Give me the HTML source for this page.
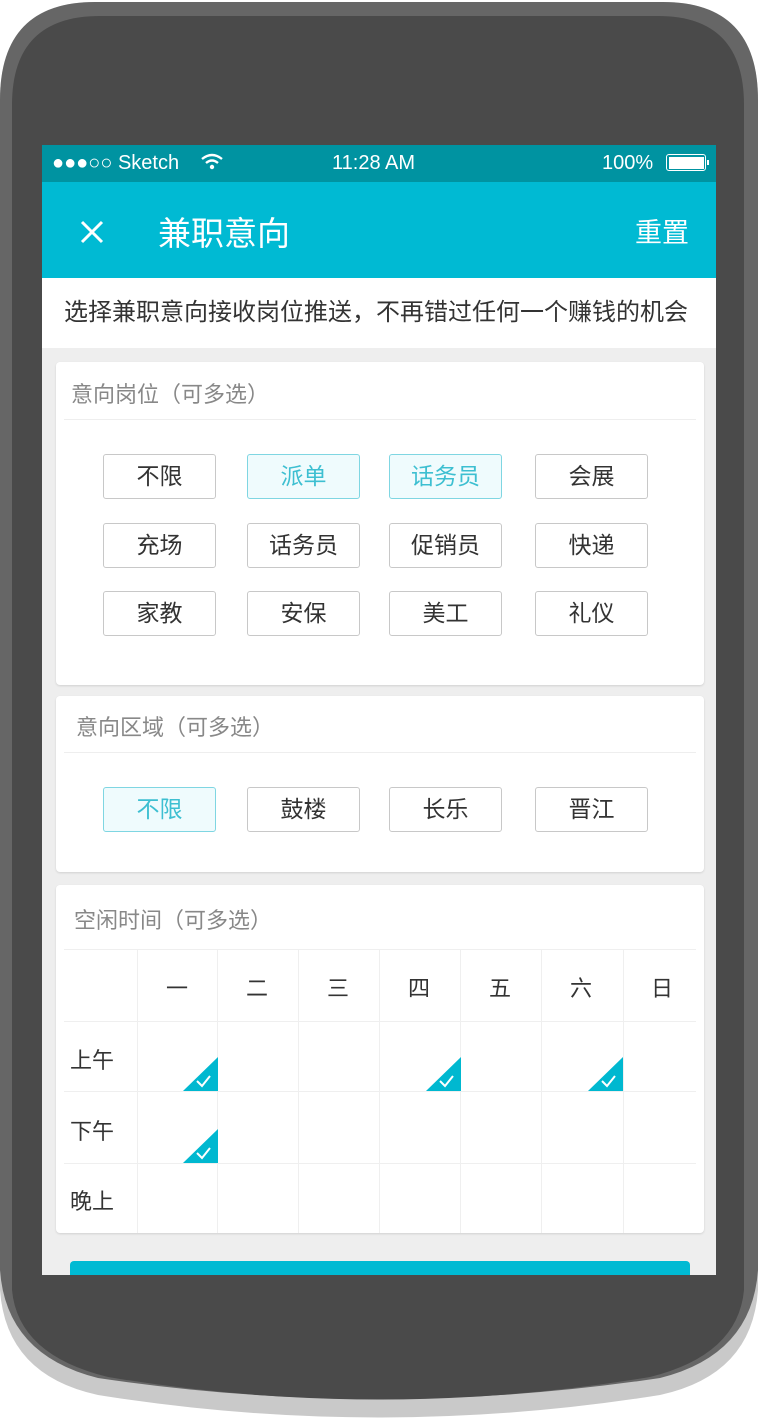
<!DOCTYPE html>
<html><head><meta charset="utf-8"><style>
*{margin:0;padding:0;box-sizing:border-box}
body{width:758px;height:1418px;background:#fff;position:relative;overflow:hidden;font-family:"Liberation Sans","Noto Sans CJK SC",sans-serif}
.abs{position:absolute}
.screen{left:42px;top:145px;width:674px;height:1130px;background:#eeeeee;overflow:hidden}
.status{left:0;top:0;width:674px;height:37px;background:#0093a1;color:#fff;font-size:20px}
.nav{left:0;top:37px;width:674px;height:96px;background:#00bad3;color:#fff}
.sub{left:0;top:133px;width:674px;height:70px;background:#fff;color:#333;font-size:24px;line-height:70px;padding-left:22px;white-space:nowrap;overflow:hidden}
.card{background:#fff;border-radius:4px;box-shadow:0 1px 2px rgba(0,0,0,.12)}
.ttl{color:#888;font-size:22px;position:absolute}
.hr{position:absolute;height:1px;background:#eee}
.btn{position:absolute;width:113px;height:45px;border:1px solid #c8c8c8;border-radius:3px;font-size:23px;color:#333;text-align:center;line-height:43px;background:#fff}
.btn.on{border-color:#7fd6e2;background:#effbfd;color:#3dbfd1}
.gl{position:absolute;background:#efefef}
.wd{position:absolute;font-size:22px;color:#333;text-align:center;width:80px}
.rl{position:absolute;font-size:22px;color:#333}
</style></head><body>
<svg class="abs" style="left:0;top:0" width="758" height="1418">
<path d="M0,100 Q0,2 95,2 L663,2 Q758,2 758,100 L758,1290 Q752,1375 660,1395 Q379,1440 98,1395 Q6,1375 0,1290 Z" fill="#c9c9c9"/>
<path d="M0,100 Q0,2 95,2 L663,2 Q758,2 758,100 L758,1270 Q752,1355 660,1378 Q379,1420 98,1378 Q6,1355 0,1270 Z" fill="#666"/>
<path d="M12,105 Q12,16 100,16 L658,16 Q744,16 744,105 L744,1290 Q738,1355 650,1377 Q379,1422 108,1377 Q18,1355 12,1290 Z" fill="#4a4a4a"/>
</svg>
<div class="abs screen">
 <div class="abs status">
  <span class="abs" style="left:10px;top:7px">●●●○○ Sketch</span>
  <svg class="abs" style="left:158px;top:8px" width="24" height="18" viewBox="0 0 24 18"><path d="M2,6 Q12,-2 22,6" stroke="#fff" stroke-width="2.4" fill="none"/><path d="M6,10 Q12,5 18,10" stroke="#fff" stroke-width="2.4" fill="none"/><circle cx="12" cy="14" r="2.2" fill="#fff"/></svg>
  <span class="abs" style="left:290px;top:7px">11:28 AM</span>
  <span class="abs" style="left:560px;top:7px">100%</span>
  <div class="abs" style="left:624px;top:9px;width:40px;height:17px;border:1.5px solid #fff;border-radius:3px;padding:1.5px"><div style="width:100%;height:100%;background:#fff"></div></div>
  <div class="abs" style="left:665px;top:15px;width:2px;height:5px;background:#fff"></div>
 </div>
 <div class="abs nav">
  <svg class="abs" style="left:37px;top:37px" width="26" height="26"><path d="M3,3 L23,23 M23,3 L3,23" stroke="#fff" stroke-width="3"/></svg>
  <span class="abs" style="left:116px;top:25px;font-size:33px">兼职意向</span>
  <span class="abs" style="left:593px;top:29px;font-size:27px">重置</span>
 </div>
 <div class="abs sub">选择兼职意向接收岗位推送，不再错过任何一个赚钱的机会</div>

 <div class="abs card" style="left:14px;top:217px;width:648px;height:323px">
  <div class="ttl" style="left:15px;top:15px">意向岗位（可多选）</div>
  <div class="hr" style="left:8px;top:57px;width:632px"></div>
  <div class="btn" style="left:47px;top:92px">不限</div>
  <div class="btn on" style="left:191px;top:92px">派单</div>
  <div class="btn on" style="left:333px;top:92px">话务员</div>
  <div class="btn" style="left:479px;top:92px">会展</div>
  <div class="btn" style="left:47px;top:161px">充场</div>
  <div class="btn" style="left:191px;top:161px">话务员</div>
  <div class="btn" style="left:333px;top:161px">促销员</div>
  <div class="btn" style="left:479px;top:161px">快递</div>
  <div class="btn" style="left:47px;top:229px">家教</div>
  <div class="btn" style="left:191px;top:229px">安保</div>
  <div class="btn" style="left:333px;top:229px">美工</div>
  <div class="btn" style="left:479px;top:229px">礼仪</div>
 </div>

 <div class="abs card" style="left:14px;top:551px;width:648px;height:176px">
  <div class="ttl" style="left:20px;top:14px">意向区域（可多选）</div>
  <div class="hr" style="left:8px;top:56px;width:632px"></div>
  <div class="btn on" style="left:47px;top:91px">不限</div>
  <div class="btn" style="left:191px;top:91px">鼓楼</div>
  <div class="btn" style="left:333px;top:91px">长乐</div>
  <div class="btn" style="left:479px;top:91px">晋江</div>
 </div>

 <div class="abs card" style="left:14px;top:740px;width:648px;height:348px">
  <div class="ttl" style="left:18px;top:18px">空闲时间（可多选）</div>
  <div class="gl" style="left:8px;top:64px;width:632px;height:1px"></div>
  <div class="gl" style="left:8px;top:136px;width:632px;height:1px"></div>
  <div class="gl" style="left:8px;top:206px;width:632px;height:1px"></div>
  <div class="gl" style="left:8px;top:278px;width:632px;height:1px"></div>
  <div class="gl" style="left:81px;top:64px;width:1px;height:284px"></div>
  <div class="gl" style="left:161px;top:64px;width:1px;height:284px"></div>
  <div class="gl" style="left:242px;top:64px;width:1px;height:284px"></div>
  <div class="gl" style="left:323px;top:64px;width:1px;height:284px"></div>
  <div class="gl" style="left:404px;top:64px;width:1px;height:284px"></div>
  <div class="gl" style="left:485px;top:64px;width:1px;height:284px"></div>
  <div class="gl" style="left:567px;top:64px;width:1px;height:284px"></div>
  <div class="wd" style="left:81px;top:86px">一</div>
  <div class="wd" style="left:161px;top:86px">二</div>
  <div class="wd" style="left:242px;top:86px">三</div>
  <div class="wd" style="left:323px;top:86px">四</div>
  <div class="wd" style="left:404px;top:86px">五</div>
  <div class="wd" style="left:485px;top:86px">六</div>
  <div class="wd" style="left:566px;top:86px">日</div>
  <div class="rl" style="left:14px;top:158px">上午</div>
  <div class="rl" style="left:14px;top:229px">下午</div>
  <div class="rl" style="left:14px;top:299px">晚上</div>
  <svg class="abs" style="left:127px;top:172px" width="35" height="34"><path d="M0,34 L35,0 L35,34 Z" fill="#00b8d0"/><path d="M14,24 L19,29 L27,19" stroke="#fff" stroke-width="2" fill="none"/></svg>
  <svg class="abs" style="left:370px;top:172px" width="35" height="34"><path d="M0,34 L35,0 L35,34 Z" fill="#00b8d0"/><path d="M14,24 L19,29 L27,19" stroke="#fff" stroke-width="2" fill="none"/></svg>
  <svg class="abs" style="left:532px;top:172px" width="35" height="34"><path d="M0,34 L35,0 L35,34 Z" fill="#00b8d0"/><path d="M14,24 L19,29 L27,19" stroke="#fff" stroke-width="2" fill="none"/></svg>
  <svg class="abs" style="left:127px;top:244px" width="35" height="34"><path d="M0,34 L35,0 L35,34 Z" fill="#00b8d0"/><path d="M14,24 L19,29 L27,19" stroke="#fff" stroke-width="2" fill="none"/></svg>
 </div>
 <div class="abs" style="left:28px;top:1116px;width:620px;height:40px;background:#00bad3;border-radius:4px"></div>
</div>
</body></html>
